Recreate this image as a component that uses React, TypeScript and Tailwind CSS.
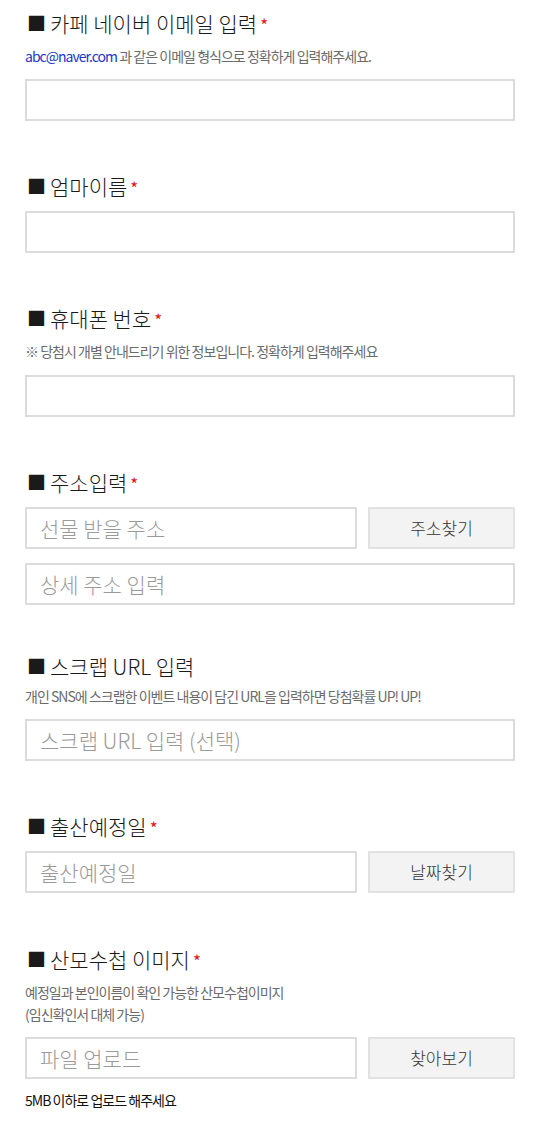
const FONT = "font-['Noto_Sans_CJK_KR','Noto_Sans',sans-serif]";

function Title({ children, required = true }: { children: React.ReactNode; required?: boolean }) {
  return (
    <h3 className="flex items-center h-[28px] text-[21px] leading-[28px] text-[#1a1a1a] font-light">
      <span className="text-[19px] mr-[4px] ml-[2px] font-normal">■</span>
      <span>{children}</span>
      {required && <span className="text-[#e01818] text-[17px] ml-[3px] mt-[3px] font-normal">*</span>}
    </h3>
  );
}

function Help({ children, className = "" }: { children: React.ReactNode; className?: string }) {
  return (
    <p className={"mt-[8px] text-[14px] leading-[22px] text-[#6b6b6b] tracking-[-0.07em] " + className}>
      {children}
    </p>
  );
}

function Field({ placeholder = "", className = "" }: { placeholder?: string; className?: string }) {
  return (
    <input
      type="text"
      placeholder={placeholder}
      className={
        "block h-[42px] border-2 border-[#dcdcdc] bg-white px-[13px] text-[21px] font-light text-[#333] placeholder:text-[#9a9a9a] outline-none " +
        className
      }
    />
  );
}

function Btn({ children }: { children: React.ReactNode }) {
  return (
    <button className="h-[42px] w-[147px] shrink-0 border-2 border-[#e2e2e2] bg-[#f3f3f3] text-[17px] font-light text-[#333]">
      {children}
    </button>
  );
}

export default function App() {
  return (
    <div className={`${FONT} w-[540px] bg-white px-[25px] pt-[9px] pb-[20px]`}>
      <section>
        <Title>카페 네이버 이메일 입력</Title>
        <Help>
          <span className="text-[#2236c8]">abc@naver.com</span> 과 같은 이메일 형식으로 정확하게 입력해주세요.
        </Help>
        <Field className="mt-[12px] w-full" />
      </section>

      <section className="mt-[51px]">
        <Title>엄마이름</Title>
        <Field className="mt-[11px] w-full" />
      </section>

      <section className="mt-[51px]">
        <Title>휴대폰 번호</Title>
        <Help>※ 당첨시 개별 안내드리기 위한 정보입니다. 정확하게 입력해주세요</Help>
        <Field className="mt-[13px] w-full" />
      </section>

      <section className="mt-[51px]">
        <Title>주소입력</Title>
        <div className="mt-[11px] flex gap-[11px]">
          <Field placeholder="선물 받을 주소" className="w-[333px]" />
          <Btn>주소찾기</Btn>
        </div>
        <Field placeholder="상세 주소 입력" className="mt-[14px] w-full" />
      </section>

      <section className="mt-[47px]">
        <Title required={false}>스크랩 URL 입력</Title>
        <Help className="!mt-[5px]">개인 SNS에 스크랩한 이벤트 내용이 담긴 URL을 입력하면 당첨확률 UP! UP!</Help>
        <Field placeholder="스크랩 URL 입력 (선택)" className="mt-[12px] w-full" />
      </section>

      <section className="mt-[51px]">
        <Title>출산예정일</Title>
        <div className="mt-[11px] flex gap-[11px]">
          <Field placeholder="출산예정일" className="w-[333px]" />
          <Btn>날짜찾기</Btn>
        </div>
      </section>

      <section className="mt-[52px]">
        <Title>산모수첩 이미지</Title>
        <Help>
          예정일과 본인이름이 확인 가능한 산모수첩이미지
          <br />
          (임신확인서 대체 가능)
        </Help>
        <div className="mt-[12px] flex gap-[11px]">
          <Field placeholder="파일 업로드" className="w-[333px]" />
          <Btn>찾아보기</Btn>
        </div>
        <p className="mt-[10px] text-[14px] leading-[22px] text-[#111] tracking-[-0.07em]">5MB 이하로 업로드 해주세요</p>
      </section>
    </div>
  );
}
